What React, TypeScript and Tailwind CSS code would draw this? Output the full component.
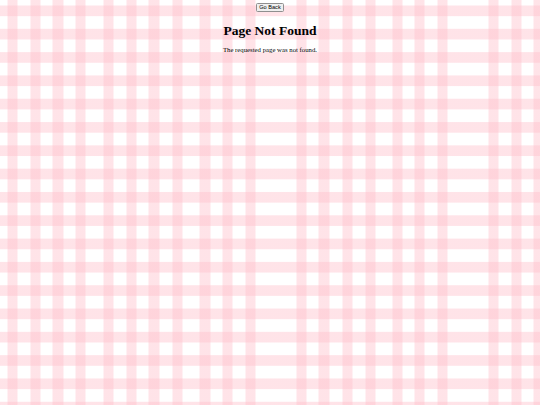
export default function App() {
  return (
    <div className="min-h-screen w-full flex flex-col items-center pt-[3px] [background:linear-gradient(90deg,transparent_7px,#ffc0cb70_8px_17px,transparent_18px,transparent_30px,#ffc0cb70_31px_40px,transparent_41px,transparent_52px,#ffc0cb70_53px_63px,transparent_64px,transparent_75px,#ffc0cb70_76px_85px,transparent_86px,transparent_103px,#ffc0cb70_104px_113px,transparent_114px,transparent_126px,#ffc0cb70_127px_136px,transparent_137px,transparent_148px,#ffc0cb70_149px_159px,transparent_160px,transparent_172px,#ffc0cb70_173px_182px,transparent_183px,transparent_199px,#ffc0cb70_200px_210px,transparent_211px,transparent_222px,#ffc0cb70_223px_232px,transparent_233px,transparent_245px,#ffc0cb70_246px_255px,transparent_256px,transparent_296px,#ffc0cb70_297px_306px,transparent_307px,transparent_318px,#ffc0cb70_319px_329px,transparent_330px,transparent_342px,#ffc0cb70_343px_352px,transparent_353px,transparent_365px,#ffc0cb70_366px_375px,transparent_376px,transparent_392px,#ffc0cb70_393px_402px,transparent_403px,transparent_414px,#ffc0cb70_415px_424px,transparent_425px,transparent_437px,#ffc0cb70_438px_447px,transparent_448px,transparent_488px,#ffc0cb70_489px_498px,transparent_499px,transparent_511px,#ffc0cb70_512px_521px,transparent_522px,transparent_533px,#ffc0cb70_534px_544px,transparent_545px),repeating-linear-gradient(180deg,transparent_-18.31px,#ffc0cb70_-17.31px_-7.66px,transparent_-6.66px_5px),#fff]">
      <button
        type="button"
        className="h-[9px] px-[2.5px] flex items-center bg-[#efefef] border-[0.5px] border-[#8f8f8f] rounded-[1.5px] text-[5.6px] leading-none text-black font-['Liberation_Sans',Arial,sans-serif]"
      >
        Go Back
      </button>
      <h1 className="mt-[10.5px] text-[13.5px] leading-[15px] font-bold text-black font-['Liberation_Serif','Times_New_Roman',serif]">
        Page Not Found
      </h1>
      <p className="mt-[8.2px] text-[6.75px] leading-[7.8px] text-black font-['Liberation_Serif','Times_New_Roman',serif]">
        The requested page was not found.
      </p>
    </div>
  );
}
